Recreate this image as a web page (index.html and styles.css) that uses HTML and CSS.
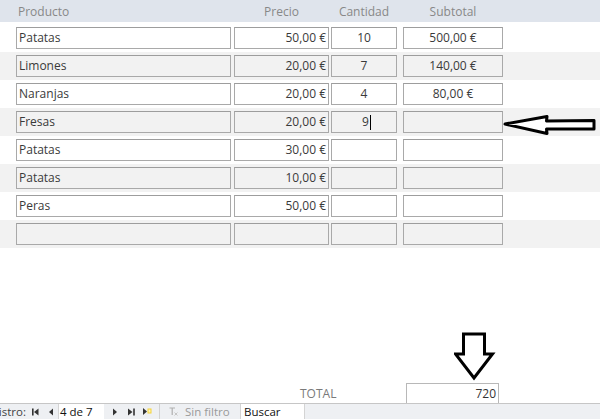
FILE: index.html
```html
<!DOCTYPE html>
<html lang="es">
<head>
<meta charset="utf-8">
<title>Productos</title>
<link rel="stylesheet" href="styles.css">
</head>
<body>
<div class="page">
  <div class="head">
    <div class="hc c-prod left">Producto</div>
    <div class="hc c-prec">Precio</div>
    <div class="hc c-cant">Cantidad</div>
    <div class="hc c-sub">Subtotal</div>
  </div>
  <div class="rows">
    <div class="row">
      <div class="cell c-prod">Patatas</div>
      <div class="cell c-prec right">50,00 €</div>
      <div class="cell c-cant center">10</div>
      <div class="cell c-sub center">500,00 €</div>
    </div>
    <div class="row">
      <div class="cell c-prod">Limones</div>
      <div class="cell c-prec right">20,00 €</div>
      <div class="cell c-cant center">7</div>
      <div class="cell c-sub center">140,00 €</div>
    </div>
    <div class="row">
      <div class="cell c-prod">Naranjas</div>
      <div class="cell c-prec right">20,00 €</div>
      <div class="cell c-cant center">4</div>
      <div class="cell c-sub center">80,00 €</div>
    </div>
    <div class="row">
      <div class="cell c-prod">Fresas</div>
      <div class="cell c-prec right">20,00 €</div>
      <div class="cell c-cant center"><span class="edit">9<span class="caret"></span></span></div>
      <div class="cell c-sub center"></div>
    </div>
    <div class="row">
      <div class="cell c-prod">Patatas</div>
      <div class="cell c-prec right">30,00 €</div>
      <div class="cell c-cant center"></div>
      <div class="cell c-sub center"></div>
    </div>
    <div class="row">
      <div class="cell c-prod">Patatas</div>
      <div class="cell c-prec right">10,00 €</div>
      <div class="cell c-cant center"></div>
      <div class="cell c-sub center"></div>
    </div>
    <div class="row">
      <div class="cell c-prod">Peras</div>
      <div class="cell c-prec right">50,00 €</div>
      <div class="cell c-cant center"></div>
      <div class="cell c-sub center"></div>
    </div>
    <div class="row">
      <div class="cell c-prod"></div>
      <div class="cell c-prec right"></div>
      <div class="cell c-cant center"></div>
      <div class="cell c-sub center"></div>
    </div>
  </div>

  <div class="total">
    <div class="total-label">TOTAL</div>
    <div class="total-box">720</div>
  </div>

  <div class="status">
    <span class="reg">Registro:</span>
    <svg class="ic ic-first" width="7" height="8" viewBox="0 0 7 8"><rect x="0" y="0.5" width="1.6" height="7" fill="#333"/><polygon points="6.5,0.5 2,4 6.5,7.5" fill="#333"/></svg>
    <svg class="ic ic-prev" width="4" height="8" viewBox="0 0 4 8"><polygon points="4,0.5 0,4 4,7.5" fill="#333"/></svg>
    <div class="recbox">4 de 7</div>
    <svg class="ic ic-next" width="4" height="8" viewBox="0 0 4 8"><polygon points="0,0.5 4,4 0,7.5" fill="#333"/></svg>
    <svg class="ic ic-last" width="7" height="8" viewBox="0 0 7 8"><polygon points="0,0.5 4.5,4 0,7.5" fill="#333"/><rect x="5.2" y="0.5" width="1.6" height="7" fill="#333"/></svg>
    <svg class="ic ic-new" width="9" height="9" viewBox="0 0 9 9"><polygon points="0,1 4,4.5 0,8" fill="#333"/><rect x="4.5" y="1.5" width="4" height="5" fill="#f4d23a"/><rect x="5.5" y="2.5" width="2" height="3" fill="#fff6b0"/></svg>
    <span class="sep"></span>
    <svg class="ic ic-filter" width="9" height="9" viewBox="0 0 9 9"><path d="M0.5 1 H6 M3.2 1 V8" stroke="#b0b0b0" stroke-width="1.2" fill="none"/><path d="M5.5 5.5 L8.5 8.5 M8.5 5.5 L5.5 8.5" stroke="#c0c0c0" stroke-width="0.9" fill="none"/></svg>
    <span class="nofilter">Sin filtro</span>
    <div class="search">Buscar</div>
  </div>

  <svg class="arrow-left" width="96" height="22" viewBox="0 0 96 22"><path d="M3 10 L45 2.5 L44.5 7 L92 6.5 L92 15 L44.5 15 L45 19.5 Z" fill="#fff" stroke="#000" stroke-width="3" stroke-linejoin="round"/></svg>
  <svg class="arrow-down" width="42" height="50" viewBox="0 0 42 50"><path d="M9.5 2 L30.5 2 L30.5 22 L38.5 22 L20 46 L1.5 22 L9.5 22 Z" fill="#fff" stroke="#000" stroke-width="3" stroke-linejoin="miter"/></svg>
</div>
</body>
</html>
```

FILE: styles.css
```css
html, body {
  margin: 0;
  padding: 0;
  background: #ffffff;
}

body {
  font-family: "Open Sans", "Noto Sans", "DejaVu Sans", sans-serif;
  font-size: 12px;
  color: #3a3a3a;
}

.page {
  position: relative;
  width: 600px;
  height: 419px;
  overflow: hidden;
}

.head {
  display: flex;
  align-items: center;
  height: 22px;
  padding-left: 16px;
  background: #dfe4ec;
  color: #888888;
}

.hc {
  text-align: center;
}

.hc.left {
  text-align: left;
  padding-left: 2px;
  box-sizing: border-box;
}

.c-prod { width: 215px; }
.c-prec { width: 95px; margin-left: 3px; }
.c-cant { width: 66px; margin-left: 2px; }
.c-sub  { width: 100px; margin-left: 6px; }

.rows {
  padding-top: 2px;
}

.row {
  display: flex;
  align-items: flex-start;
  height: 28px;
  box-sizing: border-box;
  padding: 3px 0 0 16px;
  background: #ffffff;
}

.row:nth-child(even) {
  background: #f2f2f2;
}

.cell {
  height: 22px;
  box-sizing: border-box;
  border: 1px solid #a9a9a9;
  border-top-color: #9d9d9d;
  line-height: 20px;
  padding: 0 2px;
  white-space: nowrap;
  overflow: hidden;
}

.right { text-align: right; }
.center { text-align: center; }

.edit {
  display: inline-flex;
  align-items: center;
  padding-left: 5px;
}

.caret {
  display: inline-block;
  width: 1px;
  height: 15px;
  background: #000;
  margin-left: 1px;
}

.total {
  display: flex;
  align-items: center;
  margin-top: 135px;
  padding-left: 300px;
  height: 20px;
}

.total-label {
  width: 106px;
  color: #7a7a7a;
}

.total-box {
  width: 93px;
  height: 20px;
  box-sizing: border-box;
  border: 1px solid #b8b8b8;
  border-bottom: none;
  text-align: right;
  padding-right: 2px;
  line-height: 20px;
  color: #333;
}

.status {
  display: flex;
  align-items: center;
  height: 16px;
  box-sizing: border-box;
  border-top: 1px solid #c6c6c6;
  background: #eef0f3;
  font-size: 11.5px;
  color: #444;
  white-space: nowrap;
}

.reg {
  margin-left: -21px;
  width: 49px;
  flex: none;
}

.ic { flex: none; display: block; }
.ic-first { margin-left: 4px; }
.ic-prev { margin-left: 10px; }

.recbox {
  margin-left: 5px;
  width: 46px;
  height: 15px;
  box-sizing: border-box;
  background: #fff;
  border-left: 1px solid #d4d4d4;
  padding-left: 1px;
  line-height: 15px;
  color: #111;
}

.ic-next { margin-left: 9px; }
.ic-last { margin-left: 11px; }
.ic-new { margin-left: 8px; }

.sep {
  width: 1px;
  height: 15px;
  background: #d2d2d2;
  margin-left: 7px;
  flex: none;
}

.ic-filter { margin-left: 9px; }

.nofilter {
  margin-left: 7px;
  color: #9a9a9a;
  width: 48px;
}

.search {
  margin-left: 7px;
  width: 65px;
  height: 15px;
  box-sizing: border-box;
  background: #fff;
  border-left: 1px solid #d4d4d4;
  border-right: 1px solid #d4d4d4;
  padding-left: 3px;
  line-height: 15px;
  color: #111;
}

.arrow-left {
  position: absolute;
  left: 502px;
  top: 114px;
}

.arrow-down {
  position: absolute;
  left: 454px;
  top: 332px;
}
```
